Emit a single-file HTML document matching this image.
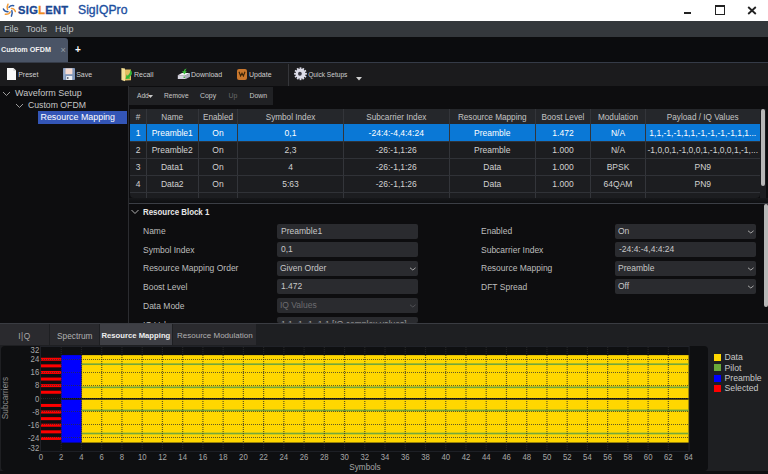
<!DOCTYPE html>
<html><head><meta charset="utf-8">
<style>
*{box-sizing:border-box;margin:0;padding:0}
html,body{width:768px;height:474px;overflow:hidden;background:#0d0d0f;font-family:"Liberation Sans",sans-serif;}
.a{position:absolute}
.t{position:absolute;white-space:nowrap;line-height:1}
#hdr{left:0;top:0;width:768px;height:21px;background:#fff}
#menu{left:0;top:21px;width:768px;height:16px;background:#34383c}
#tabs{left:0;top:37px;width:768px;height:25px;background:#0b0c0e}
#tool{left:0;top:62px;width:768px;height:24px;background:#1b1b1d;border-top:1px solid #353b47}
#tree{left:0;top:86px;width:128px;height:237px;background:#0d0d0f}
#split{left:128px;top:86px;width:1px;height:237px;background:#2b2c30}
#tt{left:129px;top:86px;width:144px;height:19px;background:#202124}
.tbl{left:130px;top:109px;width:630px;height:89px;background:#1c1d20;border-radius:0 0 4px 4px}
.th{background:#25272b}
.cell{position:absolute;text-align:center;font-size:8.5px;color:#d0d0d0;line-height:1}
.inp{position:absolute;height:15px;background:#2a2b2f;border-radius:2px;font-size:8.5px;color:#c8c8c8;padding-left:4px;line-height:15px;white-space:nowrap}
.lbl{position:absolute;font-size:8.5px;color:#bdbdbd;white-space:nowrap;line-height:1}
.chev{position:absolute;right:2px;top:5.5px;width:7px;height:4px}
</style></head><body>
<div id="hdr" class="a"></div>
<!-- logo -->
<svg class="a" style="left:0;top:0" width="18" height="19" viewBox="0 0 18 19">
  <g fill="none" stroke-width="1.45" stroke-linecap="round">
    <path d="M8 4.2Q6.6 6.8 7.6 9.4" stroke="#f29a35"/>
    <path d="M13.7 5.7Q10.8 5.2 9 7.2" stroke="#2b5aa6"/>
    <path d="M15.4 11.6Q14.6 8.6 11.4 8.4" stroke="#f29a35"/>
    <path d="M11.4 16.2Q13 13.2 11.8 10.6" stroke="#2b5aa6"/>
    <path d="M5.3 14.3Q9 14.6 10.2 12" stroke="#f29a35"/>
    <path d="M3.4 9Q4.6 11.8 8 11.8" stroke="#2b5aa6"/>
  </g>
</svg>
<div class="t" style="left:18px;top:5px;font-size:10.5px;font-weight:bold;color:#1a4792;letter-spacing:0.3px;transform:scaleX(1.06);-webkit-text-stroke:0.3px #1a4792;transform-origin:left">SIG<span style="color:#f08a1c;-webkit-text-stroke:0.3px #f08a1c">L</span>ENT</div>
<div class="t" style="left:78px;top:4.3px;font-size:12.2px;color:#1c4fa0;-webkit-text-stroke:0.35px #1c4fa0">SigIQPro</div>
<!-- window controls -->
<div class="a" style="left:684px;top:12px;width:7px;height:2px;background:#222"></div>
<div class="a" style="left:715px;top:5px;width:10px;height:10px;border:1px solid #222;border-top:2px solid #222"></div>
<svg class="a" style="left:747px;top:6px" width="10" height="9" viewBox="0 0 10 9"><path d="M1.2 1L8.8 8M8.8 1L1.2 8" stroke="#222" stroke-width="1.8"/></svg>

<div id="menu" class="a"></div>
<div class="t" style="left:4px;top:25px;font-size:9px;color:#c2c6ca">File</div>
<div class="t" style="left:26px;top:25px;font-size:9px;color:#c2c6ca">Tools</div>
<div class="t" style="left:55px;top:25px;font-size:9px;color:#c2c6ca">Help</div>

<div id="tabs" class="a"></div>
<div class="a" style="left:0;top:38px;width:68px;height:24px;background:#4a5466;border-radius:0 3px 0 0"></div>
<div class="t" style="left:1px;top:46px;font-size:7.2px;font-weight:bold;color:#f2f2f2">Custom OFDM</div>
<div class="t" style="left:60.5px;top:45.5px;font-size:9px;color:#9aa0a8">×</div>
<div class="t" style="left:75px;top:45px;font-size:10px;font-weight:bold;color:#fff">+</div>

<div id="tool" class="a"></div>
<!-- toolbar icons -->
<svg class="a" style="left:6.8px;top:68px" width="9.4" height="12" viewBox="0 0 9.4 12"><path d="M0 0H6.4L9.4 3V12H0Z" fill="#f8f8f8"/><path d="M6.4 0V3H9.4Z" fill="#d8d8d8"/></svg>
<div class="t" style="left:18.2px;top:70.5px;font-size:7px;color:#cfcfcf">Preset</div>
<svg class="a" style="left:62.7px;top:68px" width="12" height="12" viewBox="0 0 12 12"><rect x="0" y="0" width="12" height="12" rx="0.8" fill="#8198bb"/><rect x="0.6" y="0.4" width="1.2" height="11" fill="#9fb2cf"/><rect x="2.4" y="0.4" width="7" height="5.8" fill="#f6dcd2"/><rect x="3.2" y="8" width="6" height="4" fill="#eceff4"/><rect x="4.2" y="9" width="1.2" height="2" fill="#4a5060"/></svg>
<div class="t" style="left:76.2px;top:70.5px;font-size:7px;color:#cfcfcf">Save</div>
<svg class="a" style="left:120px;top:66px" width="14" height="16" viewBox="0 0 14 16"><path d="M5 3.5H11V14.2L5 14.6Z" fill="#e3bd62"/><path d="M1.4 2L5 2.6V15.2L1.4 14Z" fill="#f4e096"/><path d="M10.2 3.6Q14.2 7.8 9.4 11.2L10.4 12.6L5.6 12.9L6.6 8.4L7.8 9.7Q10.8 7.2 10.2 3.6Z" fill="#35b435"/></svg>
<div class="t" style="left:134px;top:70.5px;font-size:7px;color:#cfcfcf">Recall</div>
<svg class="a" style="left:177px;top:68px" width="14" height="12" viewBox="0 0 14 12"><path d="M0.8 7.2L5 5H13L8.8 7.2Z" fill="#f0f0f4"/><path d="M0.8 7.2H8.8V11H0.8Z" fill="#d6d4e0"/><path d="M8.8 7.2L13 5V8.8L8.8 11Z" fill="#b0aec0"/><rect x="6.5" y="8.5" width="1.5" height="1.5" fill="#4caf50"/><path d="M9.8 0.6Q7 1 6.8 3.2H5L7.4 6.4L9.8 3.2H8.2Q8.4 1.8 9.8 0.6Z" fill="#3cc03c"/></svg>
<div class="t" style="left:191px;top:70.5px;font-size:7px;color:#cfcfcf">Download</div>
<div class="a" style="left:236.5px;top:68.7px;width:10.7px;height:10.9px;background:#c9772d;border-radius:2px"></div>
<svg class="a" style="left:238px;top:71px" width="8" height="6" viewBox="0 0 8 6"><path d="M1 0.8L2.6 5L4 2.2L5.4 5L7 0.8" fill="none" stroke="#3a2408" stroke-width="1.1"/></svg>
<div class="t" style="left:249px;top:70.5px;font-size:7px;color:#cfcfcf">Update</div>
<div class="a" style="left:288px;top:64px;width:1px;height:22px;background:#35363a"></div>
<svg class="a" style="left:293.5px;top:67.3px" width="13" height="13.5" viewBox="0 0 13 13.5"><g transform="translate(6.5 6.75)"><circle r="4.9" fill="#e4e4ee"/><g fill="#dcdce8"><rect x="-0.9" y="-6.4" width="1.8" height="12.8" transform="rotate(0)"/><rect x="-0.9" y="-6.4" width="1.8" height="12.8" transform="rotate(30)"/><rect x="-0.9" y="-6.4" width="1.8" height="12.8" transform="rotate(60)"/><rect x="-0.9" y="-6.4" width="1.8" height="12.8" transform="rotate(90)"/><rect x="-0.9" y="-6.4" width="1.8" height="12.8" transform="rotate(120)"/><rect x="-0.9" y="-6.4" width="1.8" height="12.8" transform="rotate(150)"/></g><circle cx="-0.6" cy="0" r="1.9" fill="#3a3a44"/></g></svg>
<div class="t" style="left:308.2px;top:72px;font-size:6.6px;color:#cfcfcf">Quick Setups</div>
<svg class="a" style="left:356px;top:77px" width="6" height="4" viewBox="0 0 6 4"><path d="M0 0H6L3 3.5Z" fill="#d0d0d0"/></svg>

<div id="tree" class="a"></div>
<div id="split" class="a"></div>
<svg class="a" style="left:2px;top:91px" width="9" height="6" viewBox="0 0 9 6"><path d="M1 1L4.5 4.5L8 1" fill="none" stroke="#9c9c9c" stroke-width="1"/></svg>
<div class="t" style="left:15px;top:88.5px;font-size:9px;color:#c6c6c6">Waveform Setup</div>
<svg class="a" style="left:15px;top:103px" width="9" height="6" viewBox="0 0 9 6"><path d="M1 1L4.5 4.5L8 1" fill="none" stroke="#9c9c9c" stroke-width="1"/></svg>
<div class="t" style="left:28px;top:100.5px;font-size:8.7px;color:#c6c6c6">Custom OFDM</div>
<div class="a" style="left:38px;top:111px;width:89px;height:13px;background:#3355b6"></div>
<div class="t" style="left:40.5px;top:113px;font-size:8.9px;color:#fff">Resource Mapping</div>

<div id="tt" class="a" style="top:87px;height:18px"></div>
<div class="t" style="left:137px;top:92.5px;font-size:6.6px;color:#c8c8c8">Add</div>
<svg class="a" style="left:148px;top:95px" width="5" height="3" viewBox="0 0 5 3"><path d="M0 0H5L2.5 3Z" fill="#c8c8c8"/></svg>
<div class="t" style="left:164px;top:92.5px;font-size:6.6px;color:#c8c8c8">Remove</div>
<div class="t" style="left:200px;top:92.5px;font-size:6.9px;color:#c8c8c8">Copy</div>
<div class="t" style="left:228.5px;top:92.5px;font-size:6.9px;color:#6a6a6a">Up</div>
<div class="t" style="left:249.5px;top:92.5px;font-size:6.9px;color:#c8c8c8">Down</div>

<!-- table -->
<div class="a tbl"></div>
<div class="a th" style="left:130px;top:109px;width:630px;height:15px"></div>
<div class="a" style="left:130px;top:124px;width:630px;height:17px;background:#0a78d6"></div>
<div class="a" style="left:145.5px;top:109px;width:1px;height:89px;background:#33353a"></div>
<div class="a" style="left:198.0px;top:109px;width:1px;height:89px;background:#33353a"></div>
<div class="a" style="left:237.0px;top:109px;width:1px;height:89px;background:#33353a"></div>
<div class="a" style="left:343.0px;top:109px;width:1px;height:89px;background:#33353a"></div>
<div class="a" style="left:448.5px;top:109px;width:1px;height:89px;background:#33353a"></div>
<div class="a" style="left:535.0px;top:109px;width:1px;height:89px;background:#33353a"></div>
<div class="a" style="left:590.0px;top:109px;width:1px;height:89px;background:#33353a"></div>
<div class="a" style="left:645.0px;top:109px;width:1px;height:89px;background:#33353a"></div>
<div class="a" style="left:130px;top:140.5px;width:630px;height:1px;background:#303237"></div>
<div class="a" style="left:130px;top:157.5px;width:630px;height:1px;background:#303237"></div>
<div class="a" style="left:130px;top:174.5px;width:630px;height:1px;background:#303237"></div>
<div class="a" style="left:130px;top:191.5px;width:630px;height:1px;background:#303237"></div>
<div class="cell" style="left:130px;top:113.5px;width:16px;font-size:8.2px;color:#c4c4c4">#</div>
<div class="cell" style="left:146px;top:113.5px;width:52.5px;font-size:8.2px;color:#c4c4c4">Name</div>
<div class="cell" style="left:198.5px;top:113.5px;width:39.0px;font-size:8.2px;color:#c4c4c4">Enabled</div>
<div class="cell" style="left:237.5px;top:113.5px;width:106.0px;font-size:8.2px;color:#c4c4c4">Symbol Index</div>
<div class="cell" style="left:343.5px;top:113.5px;width:105.5px;font-size:8.2px;color:#c4c4c4">Subcarrier Index</div>
<div class="cell" style="left:449px;top:113.5px;width:86.5px;font-size:8.2px;color:#c4c4c4">Resource Mapping</div>
<div class="cell" style="left:535.5px;top:113.5px;width:55.0px;font-size:8.2px;color:#c4c4c4">Boost Level</div>
<div class="cell" style="left:590.5px;top:113.5px;width:55.0px;font-size:8.2px;color:#c4c4c4">Modulation</div>
<div class="cell" style="left:645.5px;top:113.5px;width:114.5px;font-size:8.2px;color:#c4c4c4">Payload / IQ Values</div>
<div class="cell" style="left:130px;top:128.5px;width:16px;color:#ffffff">1</div>
<div class="cell" style="left:146px;top:128.5px;width:52.5px;color:#ffffff">Preamble1</div>
<div class="cell" style="left:198.5px;top:128.5px;width:39.0px;color:#ffffff">On</div>
<div class="cell" style="left:237.5px;top:128.5px;width:106.0px;color:#ffffff">0,1</div>
<div class="cell" style="left:343.5px;top:128.5px;width:105.5px;color:#ffffff">-24:4:-4,4:4:24</div>
<div class="cell" style="left:449px;top:128.5px;width:86.5px;color:#ffffff">Preamble</div>
<div class="cell" style="left:535.5px;top:128.5px;width:55.0px;color:#ffffff">1.472</div>
<div class="cell" style="left:590.5px;top:128.5px;width:55.0px;color:#ffffff">N/A</div>
<div class="cell" style="left:645.5px;top:128.5px;width:114.5px;color:#ffffff">1,1,-1,-1,1,1,-1,-1,-1,-1,1,1...</div>
<div class="cell" style="left:130px;top:145.5px;width:16px;color:#d2d2d2">2</div>
<div class="cell" style="left:146px;top:145.5px;width:52.5px;color:#d2d2d2">Preamble2</div>
<div class="cell" style="left:198.5px;top:145.5px;width:39.0px;color:#d2d2d2">On</div>
<div class="cell" style="left:237.5px;top:145.5px;width:106.0px;color:#d2d2d2">2,3</div>
<div class="cell" style="left:343.5px;top:145.5px;width:105.5px;color:#d2d2d2">-26:-1,1:26</div>
<div class="cell" style="left:449px;top:145.5px;width:86.5px;color:#d2d2d2">Preamble</div>
<div class="cell" style="left:535.5px;top:145.5px;width:55.0px;color:#d2d2d2">1.000</div>
<div class="cell" style="left:590.5px;top:145.5px;width:55.0px;color:#d2d2d2">N/A</div>
<div class="cell" style="left:645.5px;top:145.5px;width:114.5px;color:#d2d2d2">-1,0,0,1,-1,0,0,1,-1,0,0,1,-1,...</div>
<div class="cell" style="left:130px;top:162.5px;width:16px;color:#d2d2d2">3</div>
<div class="cell" style="left:146px;top:162.5px;width:52.5px;color:#d2d2d2">Data1</div>
<div class="cell" style="left:198.5px;top:162.5px;width:39.0px;color:#d2d2d2">On</div>
<div class="cell" style="left:237.5px;top:162.5px;width:106.0px;color:#d2d2d2">4</div>
<div class="cell" style="left:343.5px;top:162.5px;width:105.5px;color:#d2d2d2">-26:-1,1:26</div>
<div class="cell" style="left:449px;top:162.5px;width:86.5px;color:#d2d2d2">Data</div>
<div class="cell" style="left:535.5px;top:162.5px;width:55.0px;color:#d2d2d2">1.000</div>
<div class="cell" style="left:590.5px;top:162.5px;width:55.0px;color:#d2d2d2">BPSK</div>
<div class="cell" style="left:645.5px;top:162.5px;width:114.5px;color:#d2d2d2">PN9</div>
<div class="cell" style="left:130px;top:179.5px;width:16px;color:#d2d2d2">4</div>
<div class="cell" style="left:146px;top:179.5px;width:52.5px;color:#d2d2d2">Data2</div>
<div class="cell" style="left:198.5px;top:179.5px;width:39.0px;color:#d2d2d2">On</div>
<div class="cell" style="left:237.5px;top:179.5px;width:106.0px;color:#d2d2d2">5:63</div>
<div class="cell" style="left:343.5px;top:179.5px;width:105.5px;color:#d2d2d2">-26:-1,1:26</div>
<div class="cell" style="left:449px;top:179.5px;width:86.5px;color:#d2d2d2">Data</div>
<div class="cell" style="left:535.5px;top:179.5px;width:55.0px;color:#d2d2d2">1.000</div>
<div class="cell" style="left:590.5px;top:179.5px;width:55.0px;color:#d2d2d2">64QAM</div>
<div class="cell" style="left:645.5px;top:179.5px;width:114.5px;color:#d2d2d2">PN9</div>
<div class="a" style="left:760px;top:109px;width:6px;height:89px;background:#1c1d20"></div>
<div class="a" style="left:761px;top:109px;width:4px;height:77px;background:#b8b8b8;border-radius:2px"></div>

<div class="a" style="left:129px;top:198px;width:639px;height:5px;background:linear-gradient(#16171a,#0e0f11)"></div>
<div class="a" style="left:129px;top:202.7px;width:639px;height:1.5px;background:#3b3e45"></div>
<svg class="a" style="left:131px;top:209px" width="8" height="6" viewBox="0 0 8 6"><path d="M0.5 1L4 4.5L7.5 1" fill="none" stroke="#b0b0b0" stroke-width="1"/></svg>
<div class="t" style="left:143px;top:207.5px;font-size:8.6px;font-weight:bold;color:#e6e6e6;transform:scaleX(0.92);transform-origin:left">Resource Block 1</div>

<div class="lbl" style="left:143px;top:227px">Name</div>
<div class="lbl" style="left:143px;top:245.5px">Symbol Index</div>
<div class="lbl" style="left:143px;top:264px">Resource Mapping Order</div>
<div class="lbl" style="left:143px;top:283px">Boost Level</div>
<div class="lbl" style="left:143px;top:301.5px">Data Mode</div>
<div class="inp" style="left:277px;top:224px;width:141px">Preamble1</div>
<div class="inp" style="left:277px;top:242px;width:141px">0,1</div>
<div class="inp" style="left:277px;top:261px;width:141px;padding-left:3px">Given Order<svg class="chev" width="7" height="4" viewBox="0 0 7 4"><path d="M1 0.8L3.8 3L6.6 0.8" fill="none" stroke="#b4b4b4" stroke-width="0.9"/></svg></div>
<div class="inp" style="left:277px;top:279px;width:141px">1.472</div>
<div class="inp" style="left:277px;top:298px;width:141px;padding-left:3px;color:#6c6c70">IQ Values<svg class="chev" width="7" height="4" viewBox="0 0 7 4"><path d="M1 0.8L3.8 3L6.6 0.8" fill="none" stroke="#55565a" stroke-width="0.9"/></svg></div>
<div class="inp" style="left:277px;top:316.5px;width:141px;height:6px;overflow:hidden;line-height:15px;color:#9a9a9a">1,1,-1,-1,-1,1 [IQ complex values]</div>
<div class="a" style="left:143px;top:320px;width:60px;height:2.5px;overflow:hidden"><div class="lbl" style="left:0;top:0.5px">IQ Values</div></div>

<div class="lbl" style="left:481px;top:227px">Enabled</div>
<div class="lbl" style="left:481px;top:245.5px">Subcarrier Index</div>
<div class="lbl" style="left:481px;top:264px">Resource Mapping</div>
<div class="lbl" style="left:481px;top:283px">DFT Spread</div>
<div class="inp" style="left:615px;top:224px;width:141px;padding-left:3px">On<svg class="chev" width="7" height="4" viewBox="0 0 7 4"><path d="M1 0.8L3.8 3L6.6 0.8" fill="none" stroke="#b4b4b4" stroke-width="0.9"/></svg></div>
<div class="inp" style="left:615px;top:242px;width:141px">-24:4:-4,4:4:24</div>
<div class="inp" style="left:615px;top:261px;width:141px;padding-left:3px">Preamble<svg class="chev" width="7" height="4" viewBox="0 0 7 4"><path d="M1 0.8L3.8 3L6.6 0.8" fill="none" stroke="#b4b4b4" stroke-width="0.9"/></svg></div>
<div class="inp" style="left:615px;top:279px;width:141px;padding-left:3px">Off<svg class="chev" width="7" height="4" viewBox="0 0 7 4"><path d="M1 0.8L3.8 3L6.6 0.8" fill="none" stroke="#b4b4b4" stroke-width="0.9"/></svg></div>
<div class="a" style="left:764px;top:204px;width:4px;height:103px;background:#b8b8b8;border-radius:2px"></div>

<!-- bottom -->
<div class="a" style="left:0;top:322.8px;width:768px;height:1.5px;background:#3a3c42"></div>
<div class="a" style="left:0;top:324.3px;width:768px;height:150px;background:#1e1f22"></div>
<div class="a" style="left:0;top:324.3px;width:49px;height:20.7px;background:#2a2a2e"></div>
<div class="a" style="left:50px;top:324.3px;width:48.5px;height:20.7px;background:#2a2a2e"></div>
<div class="a" style="left:100px;top:324.3px;width:72px;height:20.7px;background:#3e3f45"></div>
<div class="a" style="left:173px;top:324.3px;width:82.5px;height:20.7px;background:#2a2a2e"></div>
<div class="t" style="left:18.2px;top:331.8px;font-size:8.3px;color:#a8a8a8;letter-spacing:0.6px">I|Q</div>
<div class="t" style="left:57px;top:331.8px;font-size:8.3px;color:#b0b0b0">Spectrum</div>
<div class="t" style="left:101.5px;top:332px;font-size:7.7px;font-weight:bold;color:#eeeeee">Resource Mapping</div>
<div class="t" style="left:177px;top:331.8px;font-size:8px;color:#b0b0b0">Resource Modulation</div>

<div class="a" style="left:1px;top:346px;width:707px;height:125px;background:#0e0f11;border-radius:4px"></div>
<div class="a" style="left:0;top:471px;width:768px;height:3px;background:#0e0f11"></div>
<svg id="chart" class="a" style="left:0;top:0" width="768" height="474" font-family="Liberation Sans"><rect x="40.5" y="346.5" width="648.6" height="104.89999999999998" fill="none" stroke="#202228" stroke-width="1"/>
<rect x="81.475" y="355.125" width="607.125" height="87.45000000000005" fill="#ffd700"/>
<rect x="61.2375" y="355.125" width="20.237499999999997" height="87.45000000000005" fill="#0000ff"/>
<rect x="61.2375" y="398.02500000000003" width="627.3625000000001" height="1.65" fill="#0e0f11"/>
<rect x="81.475" y="363.375" width="607.125" height="1.65" fill="#74a83a"/>
<rect x="81.475" y="386.475" width="607.125" height="1.65" fill="#74a83a"/>
<rect x="81.475" y="409.57500000000005" width="607.125" height="1.65" fill="#74a83a"/>
<rect x="81.475" y="432.675" width="607.125" height="1.65" fill="#74a83a"/>
<rect x="41.0" y="390.75" width="20.237499999999997" height="3" fill="#ff0000"/>
<rect x="41.0" y="384.15000000000003" width="20.237499999999997" height="3" fill="#ff0000"/>
<rect x="41.0" y="377.55" width="20.237499999999997" height="3" fill="#ff0000"/>
<rect x="41.0" y="370.95000000000005" width="20.237499999999997" height="3" fill="#ff0000"/>
<rect x="41.0" y="364.35" width="20.237499999999997" height="3" fill="#ff0000"/>
<rect x="41.0" y="357.75" width="20.237499999999997" height="3" fill="#ff0000"/>
<rect x="41.0" y="436.95000000000005" width="20.237499999999997" height="3" fill="#ff0000"/>
<rect x="41.0" y="430.35" width="20.237499999999997" height="3" fill="#ff0000"/>
<rect x="41.0" y="423.75" width="20.237499999999997" height="3" fill="#ff0000"/>
<rect x="41.0" y="417.15000000000003" width="20.237499999999997" height="3" fill="#ff0000"/>
<rect x="41.0" y="410.55" width="20.237499999999997" height="3" fill="#ff0000"/>
<rect x="41.0" y="403.95000000000005" width="20.237499999999997" height="3" fill="#ff0000"/>
<line x1="61.24" y1="347" x2="61.24" y2="451" stroke="#2a2a2a" stroke-opacity="0.75" stroke-width="1.2" stroke-dasharray="1 1"/>
<line x1="81.47" y1="347" x2="81.47" y2="451" stroke="#2a2a2a" stroke-opacity="0.75" stroke-width="1.2" stroke-dasharray="1 1"/>
<line x1="101.71" y1="347" x2="101.71" y2="451" stroke="#2a2a2a" stroke-opacity="0.75" stroke-width="1.2" stroke-dasharray="1 1"/>
<line x1="121.95" y1="347" x2="121.95" y2="451" stroke="#2a2a2a" stroke-opacity="0.75" stroke-width="1.2" stroke-dasharray="1 1"/>
<line x1="142.19" y1="347" x2="142.19" y2="451" stroke="#2a2a2a" stroke-opacity="0.75" stroke-width="1.2" stroke-dasharray="1 1"/>
<line x1="162.43" y1="347" x2="162.43" y2="451" stroke="#2a2a2a" stroke-opacity="0.75" stroke-width="1.2" stroke-dasharray="1 1"/>
<line x1="182.66" y1="347" x2="182.66" y2="451" stroke="#2a2a2a" stroke-opacity="0.75" stroke-width="1.2" stroke-dasharray="1 1"/>
<line x1="202.90" y1="347" x2="202.90" y2="451" stroke="#2a2a2a" stroke-opacity="0.75" stroke-width="1.2" stroke-dasharray="1 1"/>
<line x1="223.14" y1="347" x2="223.14" y2="451" stroke="#2a2a2a" stroke-opacity="0.75" stroke-width="1.2" stroke-dasharray="1 1"/>
<line x1="243.38" y1="347" x2="243.38" y2="451" stroke="#2a2a2a" stroke-opacity="0.75" stroke-width="1.2" stroke-dasharray="1 1"/>
<line x1="263.61" y1="347" x2="263.61" y2="451" stroke="#2a2a2a" stroke-opacity="0.75" stroke-width="1.2" stroke-dasharray="1 1"/>
<line x1="283.85" y1="347" x2="283.85" y2="451" stroke="#2a2a2a" stroke-opacity="0.75" stroke-width="1.2" stroke-dasharray="1 1"/>
<line x1="304.09" y1="347" x2="304.09" y2="451" stroke="#2a2a2a" stroke-opacity="0.75" stroke-width="1.2" stroke-dasharray="1 1"/>
<line x1="324.32" y1="347" x2="324.32" y2="451" stroke="#2a2a2a" stroke-opacity="0.75" stroke-width="1.2" stroke-dasharray="1 1"/>
<line x1="344.56" y1="347" x2="344.56" y2="451" stroke="#2a2a2a" stroke-opacity="0.75" stroke-width="1.2" stroke-dasharray="1 1"/>
<line x1="364.80" y1="347" x2="364.80" y2="451" stroke="#2a2a2a" stroke-opacity="0.75" stroke-width="1.2" stroke-dasharray="1 1"/>
<line x1="385.04" y1="347" x2="385.04" y2="451" stroke="#2a2a2a" stroke-opacity="0.75" stroke-width="1.2" stroke-dasharray="1 1"/>
<line x1="405.28" y1="347" x2="405.28" y2="451" stroke="#2a2a2a" stroke-opacity="0.75" stroke-width="1.2" stroke-dasharray="1 1"/>
<line x1="425.51" y1="347" x2="425.51" y2="451" stroke="#2a2a2a" stroke-opacity="0.75" stroke-width="1.2" stroke-dasharray="1 1"/>
<line x1="445.75" y1="347" x2="445.75" y2="451" stroke="#2a2a2a" stroke-opacity="0.75" stroke-width="1.2" stroke-dasharray="1 1"/>
<line x1="465.99" y1="347" x2="465.99" y2="451" stroke="#2a2a2a" stroke-opacity="0.75" stroke-width="1.2" stroke-dasharray="1 1"/>
<line x1="486.23" y1="347" x2="486.23" y2="451" stroke="#2a2a2a" stroke-opacity="0.75" stroke-width="1.2" stroke-dasharray="1 1"/>
<line x1="506.46" y1="347" x2="506.46" y2="451" stroke="#2a2a2a" stroke-opacity="0.75" stroke-width="1.2" stroke-dasharray="1 1"/>
<line x1="526.70" y1="347" x2="526.70" y2="451" stroke="#2a2a2a" stroke-opacity="0.75" stroke-width="1.2" stroke-dasharray="1 1"/>
<line x1="546.94" y1="347" x2="546.94" y2="451" stroke="#2a2a2a" stroke-opacity="0.75" stroke-width="1.2" stroke-dasharray="1 1"/>
<line x1="567.18" y1="347" x2="567.18" y2="451" stroke="#2a2a2a" stroke-opacity="0.75" stroke-width="1.2" stroke-dasharray="1 1"/>
<line x1="587.41" y1="347" x2="587.41" y2="451" stroke="#2a2a2a" stroke-opacity="0.75" stroke-width="1.2" stroke-dasharray="1 1"/>
<line x1="607.65" y1="347" x2="607.65" y2="451" stroke="#2a2a2a" stroke-opacity="0.75" stroke-width="1.2" stroke-dasharray="1 1"/>
<line x1="627.89" y1="347" x2="627.89" y2="451" stroke="#2a2a2a" stroke-opacity="0.75" stroke-width="1.2" stroke-dasharray="1 1"/>
<line x1="648.12" y1="347" x2="648.12" y2="451" stroke="#2a2a2a" stroke-opacity="0.75" stroke-width="1.2" stroke-dasharray="1 1"/>
<line x1="668.36" y1="347" x2="668.36" y2="451" stroke="#2a2a2a" stroke-opacity="0.75" stroke-width="1.2" stroke-dasharray="1 1"/>
<line x1="41.0" y1="359.5" x2="688.6" y2="359.5" stroke="#303030" stroke-opacity="0.75" stroke-width="1" stroke-dasharray="1 1"/>
<line x1="41.0" y1="372.5" x2="688.6" y2="372.5" stroke="#303030" stroke-opacity="0.75" stroke-width="1" stroke-dasharray="1 1"/>
<line x1="41.0" y1="385.5" x2="688.6" y2="385.5" stroke="#303030" stroke-opacity="0.75" stroke-width="1" stroke-dasharray="1 1"/>
<line x1="41.0" y1="398.5" x2="688.6" y2="398.5" stroke="#303030" stroke-opacity="0.75" stroke-width="1" stroke-dasharray="1 1"/>
<line x1="41.0" y1="411.5" x2="688.6" y2="411.5" stroke="#303030" stroke-opacity="0.75" stroke-width="1" stroke-dasharray="1 1"/>
<line x1="41.0" y1="424.5" x2="688.6" y2="424.5" stroke="#303030" stroke-opacity="0.75" stroke-width="1" stroke-dasharray="1 1"/>
<line x1="41.0" y1="437.5" x2="688.6" y2="437.5" stroke="#303030" stroke-opacity="0.75" stroke-width="1" stroke-dasharray="1 1"/>
<text transform="translate(39.2 352.9) scale(0.88 1)" text-anchor="end" font-size="8.8" fill="#a8a8a8">32</text>
<text transform="translate(39.2 361.95) scale(0.88 1)" text-anchor="end" font-size="8.8" fill="#a8a8a8">24</text>
<text transform="translate(39.2 375.15000000000003) scale(0.88 1)" text-anchor="end" font-size="8.8" fill="#a8a8a8">16</text>
<text transform="translate(39.2 388.35) scale(0.88 1)" text-anchor="end" font-size="8.8" fill="#a8a8a8">8</text>
<text transform="translate(39.2 401.55) scale(0.88 1)" text-anchor="end" font-size="8.8" fill="#a8a8a8">0</text>
<text transform="translate(39.2 414.75) scale(0.88 1)" text-anchor="end" font-size="8.8" fill="#a8a8a8">-8</text>
<text transform="translate(39.2 427.95) scale(0.88 1)" text-anchor="end" font-size="8.8" fill="#a8a8a8">-16</text>
<text transform="translate(39.2 441.15000000000003) scale(0.88 1)" text-anchor="end" font-size="8.8" fill="#a8a8a8">-24</text>
<text transform="translate(39.2 451.0) scale(0.88 1)" text-anchor="end" font-size="8.8" fill="#a8a8a8">-32</text>
<text transform="translate(41.0 460) scale(0.88 1)" text-anchor="middle" font-size="8.8" fill="#a8a8a8">0</text>
<text transform="translate(61.2375 460) scale(0.88 1)" text-anchor="middle" font-size="8.8" fill="#a8a8a8">2</text>
<text transform="translate(81.475 460) scale(0.88 1)" text-anchor="middle" font-size="8.8" fill="#a8a8a8">4</text>
<text transform="translate(101.7125 460) scale(0.88 1)" text-anchor="middle" font-size="8.8" fill="#a8a8a8">6</text>
<text transform="translate(121.95 460) scale(0.88 1)" text-anchor="middle" font-size="8.8" fill="#a8a8a8">8</text>
<text transform="translate(142.1875 460) scale(0.88 1)" text-anchor="middle" font-size="8.8" fill="#a8a8a8">10</text>
<text transform="translate(162.425 460) scale(0.88 1)" text-anchor="middle" font-size="8.8" fill="#a8a8a8">12</text>
<text transform="translate(182.6625 460) scale(0.88 1)" text-anchor="middle" font-size="8.8" fill="#a8a8a8">14</text>
<text transform="translate(202.9 460) scale(0.88 1)" text-anchor="middle" font-size="8.8" fill="#a8a8a8">16</text>
<text transform="translate(223.13750000000002 460) scale(0.88 1)" text-anchor="middle" font-size="8.8" fill="#a8a8a8">18</text>
<text transform="translate(243.375 460) scale(0.88 1)" text-anchor="middle" font-size="8.8" fill="#a8a8a8">20</text>
<text transform="translate(263.6125 460) scale(0.88 1)" text-anchor="middle" font-size="8.8" fill="#a8a8a8">22</text>
<text transform="translate(283.85 460) scale(0.88 1)" text-anchor="middle" font-size="8.8" fill="#a8a8a8">24</text>
<text transform="translate(304.08750000000003 460) scale(0.88 1)" text-anchor="middle" font-size="8.8" fill="#a8a8a8">26</text>
<text transform="translate(324.325 460) scale(0.88 1)" text-anchor="middle" font-size="8.8" fill="#a8a8a8">28</text>
<text transform="translate(344.5625 460) scale(0.88 1)" text-anchor="middle" font-size="8.8" fill="#a8a8a8">30</text>
<text transform="translate(364.8 460) scale(0.88 1)" text-anchor="middle" font-size="8.8" fill="#a8a8a8">32</text>
<text transform="translate(385.0375 460) scale(0.88 1)" text-anchor="middle" font-size="8.8" fill="#a8a8a8">34</text>
<text transform="translate(405.27500000000003 460) scale(0.88 1)" text-anchor="middle" font-size="8.8" fill="#a8a8a8">36</text>
<text transform="translate(425.5125 460) scale(0.88 1)" text-anchor="middle" font-size="8.8" fill="#a8a8a8">38</text>
<text transform="translate(445.75 460) scale(0.88 1)" text-anchor="middle" font-size="8.8" fill="#a8a8a8">40</text>
<text transform="translate(465.9875 460) scale(0.88 1)" text-anchor="middle" font-size="8.8" fill="#a8a8a8">42</text>
<text transform="translate(486.225 460) scale(0.88 1)" text-anchor="middle" font-size="8.8" fill="#a8a8a8">44</text>
<text transform="translate(506.46250000000003 460) scale(0.88 1)" text-anchor="middle" font-size="8.8" fill="#a8a8a8">46</text>
<text transform="translate(526.7 460) scale(0.88 1)" text-anchor="middle" font-size="8.8" fill="#a8a8a8">48</text>
<text transform="translate(546.9375 460) scale(0.88 1)" text-anchor="middle" font-size="8.8" fill="#a8a8a8">50</text>
<text transform="translate(567.1750000000001 460) scale(0.88 1)" text-anchor="middle" font-size="8.8" fill="#a8a8a8">52</text>
<text transform="translate(587.4125 460) scale(0.88 1)" text-anchor="middle" font-size="8.8" fill="#a8a8a8">54</text>
<text transform="translate(607.65 460) scale(0.88 1)" text-anchor="middle" font-size="8.8" fill="#a8a8a8">56</text>
<text transform="translate(627.8875 460) scale(0.88 1)" text-anchor="middle" font-size="8.8" fill="#a8a8a8">58</text>
<text transform="translate(648.125 460) scale(0.88 1)" text-anchor="middle" font-size="8.8" fill="#a8a8a8">60</text>
<text transform="translate(668.3625000000001 460) scale(0.88 1)" text-anchor="middle" font-size="8.8" fill="#a8a8a8">62</text>
<text transform="translate(688.6 460) scale(0.88 1)" text-anchor="middle" font-size="8.8" fill="#a8a8a8">64</text>
<text x="365" y="469.5" text-anchor="middle" font-size="8.2" fill="#a6a6a6">Symbols</text>
<text transform="translate(7.6 398) rotate(-90)" text-anchor="middle" font-size="8.3" fill="#8e8e8e">Subcarriers</text></svg>
<div class="a" style="left:714px;top:353.8px;width:7px;height:7px;background:#ffd700"></div>
<div class="a" style="left:714px;top:364.2px;width:7px;height:7px;background:#6aa83a"></div>
<div class="a" style="left:714px;top:374.7px;width:7px;height:7px;background:#0000ff"></div>
<div class="a" style="left:714px;top:384.7px;width:7px;height:7px;background:#ff0000"></div>
<div class="t" style="left:724.5px;top:353px;font-size:8.7px;color:#c8c8c8">Data</div>
<div class="t" style="left:724.5px;top:363.5px;font-size:8.7px;color:#c8c8c8">Pilot</div>
<div class="t" style="left:724.5px;top:374px;font-size:8.7px;color:#c8c8c8">Preamble</div>
<div class="t" style="left:724.5px;top:384px;font-size:8.7px;color:#c8c8c8">Selected</div>
</body></html>
